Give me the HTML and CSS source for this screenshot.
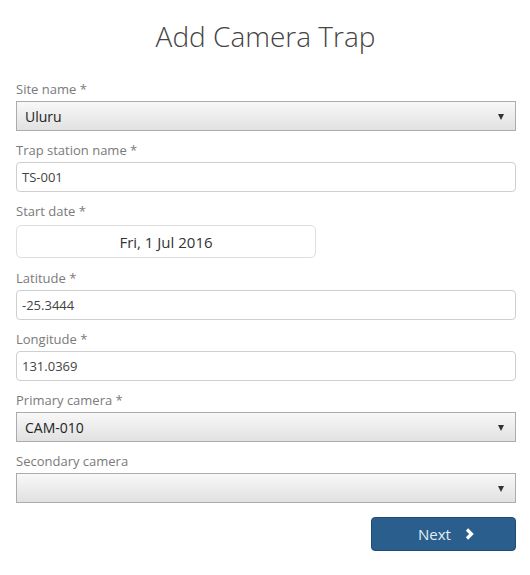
FILE: index.html
```html
<!DOCTYPE html>
<html>
<head>
<meta charset="utf-8">
<link rel="stylesheet" href="styles.css">
</head>
<body>
<div class="page">
  <h1 class="title">Add Camera Trap</h1>
  <form class="form">
    <div class="field">
      <label class="label">Site name *</label>
      <div class="select"><span class="select-value">Uluru</span></div>
    </div>
    <div class="field">
      <label class="label">Trap station name *</label>
      <div class="input">TS-001</div>
    </div>
    <div class="field field-date">
      <label class="label">Start date *</label>
      <div class="date">Fri, 1 Jul 2016</div>
    </div>
    <div class="field">
      <label class="label">Latitude *</label>
      <div class="input">-25.3444</div>
    </div>
    <div class="field">
      <label class="label">Longitude *</label>
      <div class="input">131.0369</div>
    </div>
    <div class="field">
      <label class="label">Primary camera *</label>
      <div class="select"><span class="select-value">CAM-010</span></div>
    </div>
    <div class="field">
      <label class="label">Secondary camera</label>
      <div class="select"><span class="select-value"></span></div>
    </div>
    <div class="actions">
      <button type="button" class="btn">Next
        <svg class="chev" width="10" height="12" viewBox="0 0 10 12"><path d="M2 1.5 L6.5 6 L2 10.5" fill="none" stroke="#ffffff" stroke-width="3.2" stroke-linecap="butt" stroke-linejoin="miter"/></svg>
      </button>
    </div>
  </form>
</div>
</body>
</html>
```

FILE: styles.css
```css
html, body {
  margin: 0;
  padding: 0;
  background: #ffffff;
}
body {
  font-family: "Open Sans", "Liberation Sans", sans-serif;
  color: #333;
}
.page {
  padding: 16px 14px 0 16px;
}
.title {
  margin: 0 0 24px 0;
  font-size: 28px;
  font-weight: 300;
  line-height: 40px;
  color: #444;
  text-align: center;
  padding-right: 1px;
}
.form {
  display: flex;
  flex-direction: column;
}
.field {
  display: flex;
  flex-direction: column;
  align-items: flex-start;
  margin-bottom: 10px;
}
.field-date {
  margin-bottom: 11px;
}
.label {
  font-size: 13px;
  line-height: 18px;
  color: #7a7a7a;
  margin-bottom: 3px;
}
.field-date .label {
  margin-bottom: 5px;
}
.select {
  position: relative;
  box-sizing: border-box;
  width: 100%;
  height: 30px;
  border: 1px solid #acacac;
  background: linear-gradient(#f8f8f8, #e1e1e1);
  display: flex;
  align-items: center;
  padding-left: 8px;
  font-size: 14px;
  color: #222;
}
.select::after {
  content: "";
  position: absolute;
  right: 11px;
  top: 12px;
  border-left: 3.5px solid transparent;
  border-right: 3.5px solid transparent;
  border-top: 6px solid #333;
}
.input {
  box-sizing: border-box;
  width: 100%;
  height: 30px;
  border: 1px solid #cfcfcf;
  border-radius: 4px;
  padding-left: 5px;
  display: flex;
  align-items: center;
  font-size: 13px;
  color: #444;
}
.date {
  box-sizing: border-box;
  width: 300px;
  height: 33px;
  border: 1px solid #dedede;
  border-radius: 5px;
  display: flex;
  align-items: center;
  justify-content: center;
  font-size: 15px;
  color: #333;
}
.actions {
  display: flex;
  justify-content: flex-end;
  margin-top: 4px;
}
.btn {
  box-sizing: border-box;
  width: 145px;
  height: 34px;
  background: #2a5f8d;
  border: 1px solid #1f4c74;
  border-radius: 4px;
  color: #e6eef5;
  font-family: "Open Sans", "Liberation Sans", sans-serif;
  font-size: 15px;
  display: flex;
  align-items: center;
  justify-content: center;
  gap: 14px;
  padding: 0 0 0 6px;
  cursor: pointer;
}
.chev {
  display: block;
}
```
